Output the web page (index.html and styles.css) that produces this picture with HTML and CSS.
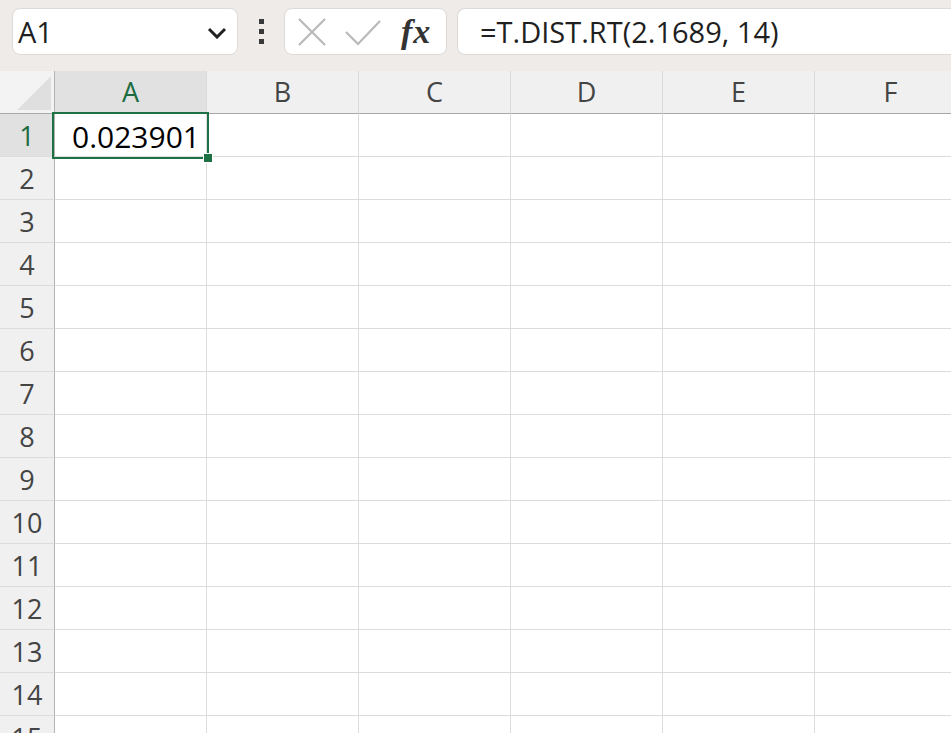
FILE: index.html
```html
<!DOCTYPE html>
<html lang="en">
<head>
    <meta charset="UTF-8">
    <title>Book1 - Excel</title>
    <link rel="stylesheet" href="styles.css">
</head>
<body>
<div class="toolbar">
    <div class="name-box">
        <span>A1</span>
        <svg class="chevron" width="20" height="12" viewBox="0 0 20 12"><path d="M2 2 L10 10 L18 2" fill="none" stroke="#222" stroke-width="3"/></svg>
    </div>
    <div class="dots"><i></i><i></i><i></i></div>
    <div class="fn-box">
        <svg width="30" height="30" viewBox="0 0 30 30"><path d="M2 2 L28 28 M28 2 L2 28" stroke="#b9b9b9" stroke-width="2.2"/></svg>
        <svg width="38" height="30" viewBox="0 0 38 30"><path d="M2 15 L14 27 L36 4" fill="none" stroke="#b9b9b9" stroke-width="2.2"/></svg>
        <span class="fx">fx</span>
    </div>
    <div class="formula">=T.DIST.RT(2.1689, 14)</div>
</div>

<div class="sheet">
    <div class="grid" id="grid"></div>
    <div class="selection"><span class="handle"></span></div>
</div>

<script>
    const grid = document.getElementById('grid');
    const cols = ['A', 'B', 'C', 'D', 'E', 'F'];

    // header row
    let html = '<div class="corner"><span class="tri"></span></div>';
    cols.forEach((c, i) => {
        html += `<div class="col-head${i === 0 ? ' active' : ''}">${c}</div>`;
    });

    for (let r = 1; r <= 15; r++) {
        html += `<div class="row-head${r === 1 ? ' active' : ''}">${r}</div>`;
        cols.forEach((c) => {
            const val = (r === 1 && c === 'A') ? '0.023901' : '';
            html += `<div class="cell">${val}</div>`;
        });
    }
    grid.innerHTML = html;
</script>
</body>
</html>
```

FILE: styles.css
```css
body {
    margin: 0;
    font-family: "Open Sans", "Noto Sans", sans-serif;
    background: #fff;
    overflow: hidden;
    width: 951px;
    height: 733px;
}
.toolbar {
    height: 71px;
    box-sizing: border-box;
    background: #eeebe9;
    display: flex;
    align-items: flex-start;
    padding: 8px 0 0 12px;
    white-space: nowrap;
}
.name-box {
    width: 226px;
    height: 47px;
    box-sizing: border-box;
    background: #fff;
    border: 1px solid #dedad8;
    border-radius: 8px;
    display: flex;
    align-items: center;
    justify-content: space-between;
    padding: 0 10px 0 5px;
    font-size: 29px;
    color: #1f1f1f;
}
.chevron {
    margin-top: 2px;
}
.dots {
    width: 46px;
    height: 47px;
    display: flex;
    flex-direction: column;
    align-items: center;
    justify-content: center;
    gap: 5px;
}
.dots i {
    width: 5px;
    height: 5px;
    background: #3a3a3a;
}
.fn-box {
    width: 163px;
    height: 47px;
    box-sizing: border-box;
    background: #fff;
    border: 1px solid #dedad8;
    border-radius: 8px;
    display: flex;
    align-items: center;
    padding: 0 8px 0 12px;
    gap: 17px;
}
.fx {
    font-family: "Liberation Serif", serif;
    font-style: italic;
    font-weight: bold;
    font-size: 34px;
    color: #333;
    margin-left: 2px;
    letter-spacing: 1px;
}
.formula {
    margin-left: 10px;
    flex: 1;
    height: 47px;
    box-sizing: border-box;
    background: #fff;
    border: 1px solid #dedad8;
    border-right: none;
    border-radius: 8px 0 0 8px;
    padding: 0 0 0 22px;
    display: flex;
    align-items: center;
    font-size: 29px;
    color: #1f1f1f;
}
.sheet {
    position: relative;
}
.grid {
    display: grid;
    grid-template-columns: 55px repeat(6, 152px);
    grid-auto-rows: 43px;
}
.grid > div {
    box-sizing: border-box;
}
.corner {
    background: #f3f3f3;
    border-right: 1px solid #b3b3b3;
    border-bottom: 1px solid #a8a8a8;
    position: relative;
}
.tri {
    position: absolute;
    right: 3px;
    bottom: 3px;
    width: 0;
    height: 0;
    border-left: 34px solid transparent;
    border-bottom: 34px solid #dfdfdf;
}
.col-head {
    background: #f0f0f0;
    border-right: 1px solid #dcdcdc;
    border-bottom: 1px solid #a8a8a8;
    text-align: center;
    font-size: 27px;
    line-height: 42px;
    color: #444;
}
.row-head {
    background: #f0f0f0;
    border-right: 1px solid #b3b3b3;
    border-bottom: 1px solid #dcdcdc;
    text-align: center;
    font-size: 27px;
    line-height: 44px;
    color: #444;
}
.col-head.active,
.row-head.active {
    background: #e1e1e1;
    color: #1d6b40;
}
.cell {
    border-right: 1px solid #dcdcdc;
    border-bottom: 1px solid #dcdcdc;
    text-align: right;
    font-size: 30px;
    line-height: 45px;
    padding-right: 6px;
    color: #000;
}
.selection {
    position: absolute;
    left: 52px;
    top: 41px;
    width: 157px;
    height: 47px;
    box-sizing: border-box;
    border: 2px solid #1e7145;
}
.handle {
    position: absolute;
    right: -6px;
    bottom: -6px;
    width: 8px;
    height: 8px;
    background: #1e7145;
    border: 1px solid #fff;
}
```
